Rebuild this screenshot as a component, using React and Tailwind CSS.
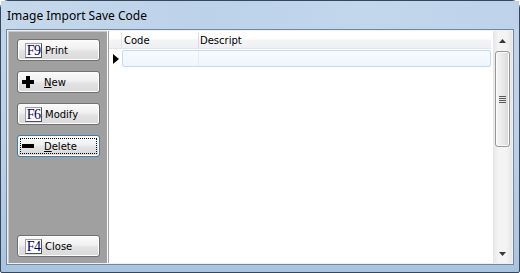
import React from 'react';

const KeyBox = ({ k }) => (
  <span className="flex h-[15px] w-[17px] items-center justify-center border border-[#a0a0a0] border-r-[#505050] border-b-[#505050] bg-[#fbfbff] pt-[1px] font-['Liberation_Serif',serif] text-[14px] leading-none tracking-[-0.6px] text-[#00005a]">
    {k}
  </span>
);

const PlusIcon = () => (
  <svg width="12" height="12" viewBox="0 0 12 12">
    <rect x="4" y="0" width="4" height="12" fill="#000" />
    <rect x="0" y="4" width="12" height="4" fill="#000" />
  </svg>
);

const MinusIcon = () => (
  <svg width="12" height="12" viewBox="0 0 12 12">
    <rect x="0" y="4" width="12" height="4" fill="#000" />
  </svg>
);

const Btn = ({ children, focused, icon }) => (
  <div
    className={`relative flex h-[22px] w-[83px] items-center rounded-[3px] border bg-[linear-gradient(to_bottom,#fbfbfb_0%,#f0f0f0_45%,#e3e3e3_55%,#d9d9d9_100%)] shadow-[inset_0_0_0_1px_#fdfdfd] ${
      focused ? 'border-[#3c7fb1]' : 'border-[#707070]'
    } ${icon ? 'pl-[4px]' : 'pl-[7px]'}`}
  >
    {focused && (
      <div className="pointer-events-none absolute inset-[2px] border border-dotted border-black" />
    )}
    {children}
  </div>
);

const Label = ({ children, gap }) => (
  <span className={`${gap} pt-[1px] font-['DejaVu_Sans',sans-serif] text-[10px] leading-none text-black`}>{children}</span>
);

export default function App() {
  return (
    <div className="h-[273px] w-[520px] bg-white">
      <div className="flex h-[273px] w-[520px] flex-col rounded-t-[8px] rounded-b-[2px] border border-[#34475d] bg-[linear-gradient(to_bottom,#c3d6ea,#b9cfe6_60%,#abc4de)]">
        <div className="flex h-[28px] items-center bg-[linear-gradient(to_right,#c6d8eb,#bcd2e9_40%,#c2d7ec_70%,#bed3e9)] pl-[6px] pt-[1px]">
          <span className="font-['Noto_Sans',sans-serif] text-[12px] leading-none text-black">Image Import Save Code</span>
        </div>
        <div className="mx-[5px] flex h-[236px] border border-[#7388a0] bg-[#f0f0f0]">
          <div className="ml-[1px] mt-[1px] mb-[1px] flex w-[99px] flex-col justify-between border-l border-t border-[#c8c8c8] bg-[#a0a0a0] pb-[6px] pl-[8px] pt-[7px]">
            <div className="flex flex-col gap-[10px]">
              <Btn>
                <KeyBox k="F9" />
                <Label gap="ml-[3px]">Print</Label>
              </Btn>
              <Btn icon>
                <PlusIcon />
                <Label gap="ml-[10px]">
                  <u>N</u>ew
                </Label>
              </Btn>
              <Btn>
                <KeyBox k="F6" />
                <Label gap="ml-[3px]">Modify</Label>
              </Btn>
              <Btn icon focused>
                <MinusIcon />
                <Label gap="ml-[10px]">
                  <u>D</u>elete
                </Label>
              </Btn>
            </div>
            <Btn>
              <KeyBox k="F4" />
              <Label gap="ml-[3px]">Close</Label>
            </Btn>
          </div>
          <div className="w-[1px] bg-white" />
          <div className="mt-[1px] mb-[1px] flex flex-1 border-l border-[#a0a0a0] bg-white">
            <div className="flex flex-1 flex-col pr-[2px]">
              <div className="flex h-[18px] border-b border-[#e5e5e5] bg-[linear-gradient(to_bottom,#ffffff,#ffffff_45%,#f3f4f6_55%,#eef0f3)] pt-[2px]">
                <div className="w-[13px] border-r border-[#e3e3e3]" />
                <div className="flex w-[77px] items-center border-r border-[#dcdcdc] pl-[2px]">
                  <span className="font-['DejaVu_Sans',sans-serif] text-[10px] leading-none text-black">Code</span>
                </div>
                <div className="flex flex-1 items-center pl-[1px]">
                  <span className="font-['DejaVu_Sans',sans-serif] text-[10px] leading-none text-black">Descript</span>
                </div>
              </div>
              <div className="mt-[1px] flex h-[17px]">
                <div className="flex w-[13px] items-center justify-center">
                  <svg width="6" height="10" viewBox="0 0 6 10">
                    <path d="M0 0 L6 5 L0 10 Z" fill="#000" />
                  </svg>
                </div>
                <div className="flex flex-1 rounded-[2px] border border-[#c3dbf5] bg-[linear-gradient(to_bottom,#f7fbff,#edf5fd)]">
                  <div className="w-[76px] border-r border-[#e2ecf7]" />
                  <div className="flex-1" />
                </div>
              </div>
            </div>
            <div className="flex w-[19px] flex-col bg-[linear-gradient(to_right,#e6e6e6,#f4f4f4_30%,#f4f4f4_70%,#e6e6e6)]">
              <div className="flex h-[19px] items-center justify-center">
                <svg width="7" height="4" viewBox="0 0 7 4">
                  <path d="M3.5 0 L7 4 L0 4 Z" fill="#3a3a3a" />
                </svg>
              </div>
              <div className="mx-[2px] mt-[1px] flex h-[96px] flex-col items-center justify-center gap-[1px] rounded-[3px] border border-[#979797] bg-[linear-gradient(to_right,#f6f6f6,#e9e9e9_50%,#d9d9d9)] shadow-[inset_0_0_0_1px_#fbfbfb]">
                <div className="h-[1px] w-[7px] bg-[#5a5a5a]" />
                <div className="h-[1px] w-[7px] bg-[#5a5a5a]" />
                <div className="h-[1px] w-[7px] bg-[#5a5a5a]" />
                <div className="h-[1px] w-[7px] bg-[#5a5a5a]" />
              </div>
              <div className="flex-1" />
              <div className="flex h-[18px] items-center justify-center">
                <svg width="7" height="4" viewBox="0 0 7 4">
                  <path d="M0 0 L7 0 L3.5 4 Z" fill="#3a3a3a" />
                </svg>
              </div>
            </div>
            <div className="w-[1px] bg-[#f0f0f0]" />
          </div>
        </div>
      </div>
    </div>
  );
}
